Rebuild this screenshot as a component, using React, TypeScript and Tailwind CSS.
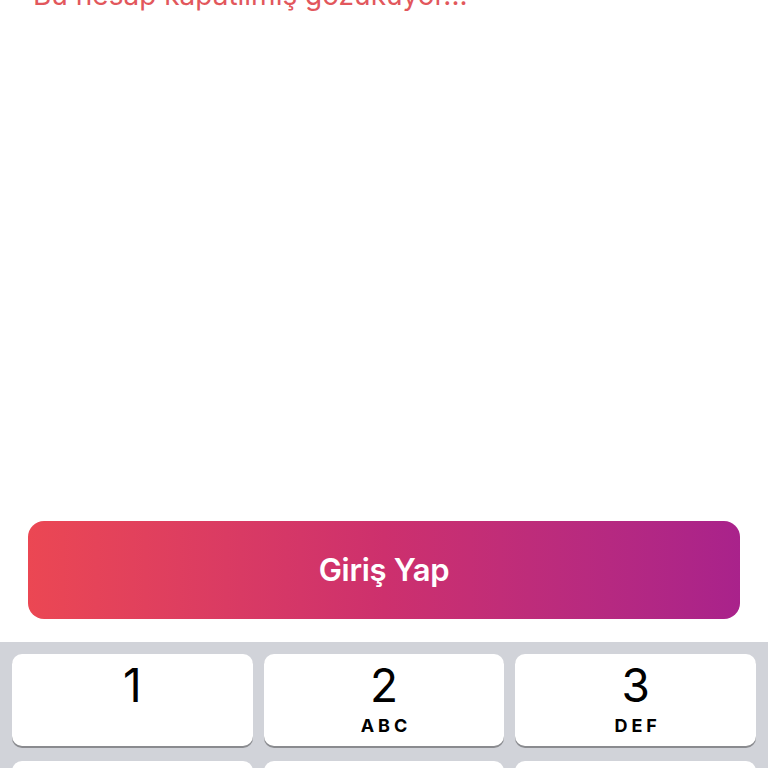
import React from "react";

const keys = [
  { d: "1", l: "" },
  { d: "2", l: "ABC" },
  { d: "3", l: "DEF" },
];

export default function App() {
  return (
    <div
      className="h-[768px] w-[768px] overflow-hidden bg-white flex flex-col"
      style={{ fontFamily: "Inter, 'Noto Sans', sans-serif" }}
    >
      <div className="h-[10px] overflow-visible relative">
        <div className="absolute left-[33px] top-[-24px] text-[28px] leading-[38px] text-[#e2575c] whitespace-nowrap">
          Bu hesap kapatılmış gözüküyor...
        </div>
      </div>
      <div className="flex-1" />
      <div className="px-[28px] pb-[23px]">
        <button className="w-full h-[98px] rounded-[16px] bg-gradient-to-r from-[#eb4753] via-[#cd306d] to-[#a9228b] text-white text-[31px] font-semibold flex items-center justify-center tracking-[-0.3px]">
          Giriş Yap
        </button>
      </div>
      <div className="bg-[#d1d3d9] h-[126px] px-3 pt-3">
        <div className="grid grid-cols-3 gap-x-[11px] gap-y-[15px]">
          {keys.map((k) => (
            <div
              key={k.d}
              className="h-[92px] bg-white rounded-[10px] shadow-[0_2px_0_#8a8b8f] flex flex-col items-center pt-[6px]"
            >
              <div className="text-[46px] leading-[46px] font-normal text-black mt-[2px]">{k.d}</div>
              <div className="text-[18px] leading-[20px] font-bold tracking-[4px] text-black mt-[8px] pl-[4px]">
                {k.l}
              </div>
            </div>
          ))}
          <div className="h-[92px] bg-white rounded-[10px]" />
          <div className="h-[92px] bg-white rounded-[10px]" />
          <div className="h-[92px] bg-white rounded-[10px]" />
        </div>
      </div>
    </div>
  );
}
